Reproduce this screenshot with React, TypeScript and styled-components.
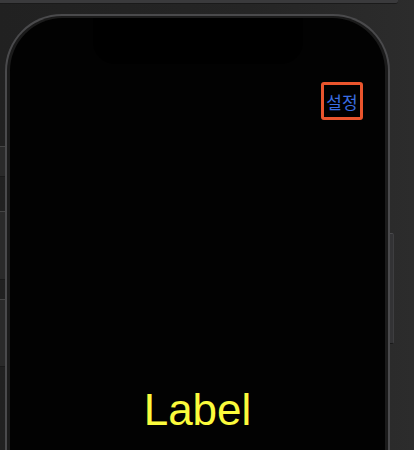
import React, { FC } from 'react';
import styled, { createGlobalStyle } from 'styled-components';

const GlobalStyle = createGlobalStyle`
  html, body {
    margin: 0;
    padding: 0;
    background: #232323;
    overflow: hidden;
  }
  body {
    font-family: "Liberation Sans", Arial, "Noto Sans CJK KR", sans-serif;
  }
`;

const Canvas = styled.div`
  width: 414px;
  height: 450px;
  overflow: hidden;
  display: flex;
  flex-direction: column;
  background: linear-gradient(to right, #212121 0%, #252525 60%, #2c2c2c 100%);
`;

const SceneBar = styled.div`
  width: 398px;
  height: 3px;
  background: #3a3a3c;
  border-bottom: 1px solid #1a1a1a;
  border-bottom-right-radius: 3px;
  flex-shrink: 0;
`;

const Device = styled.div`
  position: relative;
  margin: 10px 0 0 5px;
  width: 385px;
  height: 460px;
  flex-shrink: 0;
  box-sizing: border-box;
  border: 2px solid #4a4a4c;
  border-bottom: none;
  border-radius: 57px 57px 0 0;
  background: #1b1b1b;
  padding: 2px 3px 0 3px;
  display: flex;
`;

const SideButton = styled.div<{ $side: 'left' | 'right'; $top: number; $height: number }>`
  position: absolute;
  top: ${p => p.$top}px;
  height: ${p => p.$height}px;
  ${p => (p.$side === 'left' ? 'left: -7px;' : 'right: -6px;')}
  width: ${p => (p.$side === 'left' ? 5 : 4)}px;
  box-sizing: border-box;
  background: ${p => (p.$side === 'left' ? '#2a2a2a' : '#333335')};
  border-top: 1px solid ${p => (p.$side === 'left' ? '#454545' : '#4a4a4c')};
  border-bottom: 1px solid #1a1a1a;
  ${p => (p.$side === 'right' ? 'border-right: 1px solid #3e3e40; border-radius: 0 2px 2px 0;' : '')}
`;

const Screen = styled.div`
  flex: 1;
  border-radius: 53px 53px 0 0;
  background: #020202;
  display: flex;
  flex-direction: column;
  align-items: center;
`;

const Notch = styled.div`
  width: 210px;
  height: 46px;
  background: #000;
  border-radius: 0 0 22px 22px;
  flex-shrink: 0;
`;

const NavRow = styled.div`
  align-self: stretch;
  display: flex;
  justify-content: flex-end;
  padding: 18px 22px 0 0;
`;

const SettingsButton = styled.button`
  box-sizing: border-box;
  width: 42px;
  height: 38px;
  border: 3px solid #ea552d;
  border-radius: 3px;
  background: #000;
  padding: 0;
  color: #3a6de2;
  font-family: "Noto Sans CJK KR", sans-serif;
  font-size: 17px;
  line-height: 1;
  display: flex;
  align-items: center;
  justify-content: center;
  cursor: pointer;
`;

const TitleLabel = styled.div`
  margin-top: 268px;
  color: #fbfb3c;
  font-family: "Liberation Sans", Arial, sans-serif;
  font-size: 44px;
  line-height: 1;
`;

const leftButtons = [
  { top: 130, height: 31 },
  { top: 195, height: 69 },
  { top: 283, height: 68 },
];

const App: FC = () => (
  <Canvas>
    <GlobalStyle />
    <SceneBar />
    <Device>
      {leftButtons.map(b => (
        <SideButton key={b.top} $side="left" $top={b.top} $height={b.height} />
      ))}
      <SideButton $side="right" $top={217} $height={111} />
      <Screen>
        <Notch />
        <NavRow>
          <SettingsButton>설정</SettingsButton>
        </NavRow>
        <TitleLabel>Label</TitleLabel>
      </Screen>
    </Device>
  </Canvas>
);

export default App;
